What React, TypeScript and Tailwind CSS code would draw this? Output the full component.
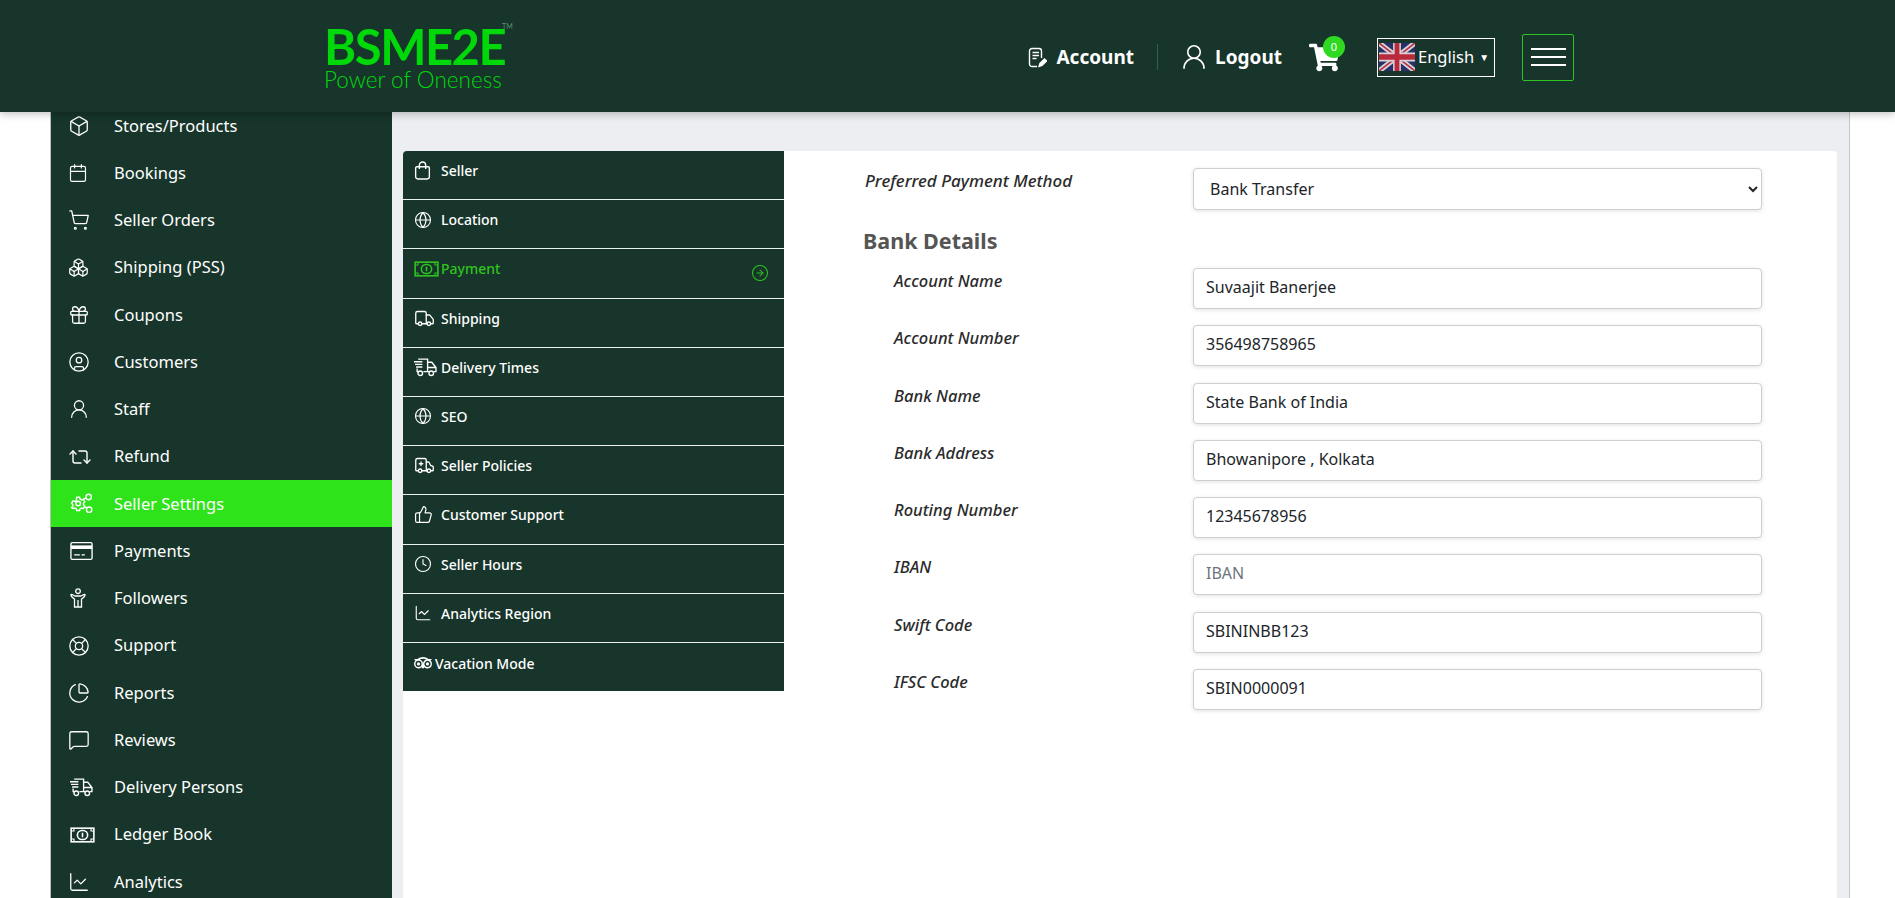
import React from "react";
import {
  Box, Calendar, ShoppingCart, Boxes, Gift, CircleUser, UserRound, Repeat2, LifeBuoy, ChartPie,
  MessageSquare, ChartLine, Globe, Truck, Ambulance, ThumbsUp, Clock, CircleArrowRight,
} from "lucide-react";
import { FaShoppingCart, FaTripadvisor } from "react-icons/fa";

type IconT = React.FC<{ className?: string; size?: number; strokeWidth?: number }>;

const SettingsGroup: IconT = ({ className }) => (
  <svg viewBox="0 0 24 22" className={className} fill="none" stroke="currentColor" strokeWidth="1.5" width="23" height="21">
    <circle cx="8.5" cy="11" r="2.4" />
    <path d="M7 4.5h3l.5 1.8 1.7.9 1.8-.6 1.4 2.6-1.3 1.3v1.9l1.3 1.3-1.4 2.6-1.8-.6-1.7.9-.5 1.8H7l-.5-1.8-1.7-.9-1.8.6L1.6 15.3l1.3-1.3v-1.9L1.6 10.8 3 8.2l1.8.6 1.7-.9z" />
    <circle cx="19.5" cy="4.2" r="2.8" />
    <circle cx="20" cy="17.5" r="2.8" />
    <path d="M14 6.5l3-1.4M15.5 14.5l2.2 1.3" />
  </svg>
);
const CardIcon: IconT = ({ className }) => (
  <svg viewBox="0 0 20 16" className={className} width="23" height="18" fill="none">
    <rect x="0.6" y="0.6" width="18.8" height="14.8" rx="1.2" stroke="currentColor" strokeWidth="1.2" />
    <rect x="0.6" y="3" width="18.8" height="3.2" fill="currentColor" />
    <path d="M3.5 11.5h5M10 11.5h3" stroke="currentColor" strokeWidth="1.2" />
  </svg>
);
const PersonUp: IconT = ({ className }) => (
  <svg viewBox="0 0 16 20" className={className} width="16" height="20" fill="none" stroke="currentColor" strokeWidth="1.3">
    <circle cx="8" cy="3.2" r="2.3" />
    <path d="M1 6.5c1.5-.5 2.5 1 4 1.5h6c1.500-.5 2.500-2 4-1.500.3 2-2 3.500-3.500 4.500V19h-7v-8C3 10 .7 8.500 1 6.500zM8 12v7" />
  </svg>
);
const FastTruck: IconT = ({ className }) => (
  <svg viewBox="0 0 22 18" className={className} width="23" height="19" fill="none" stroke="currentColor" strokeWidth="1.3">
    <path d="M4 1h9v12H9M4 13H3v-3M13 4h4l4 5v4h-2M13 13h1.500M13 9h8" />
    <path d="M0 3.500h8M1 6h7M2 8.500h6" />
    <circle cx="6" cy="14.500" r="2.200" />
    <circle cx="16.500" cy="14.500" r="2.200" />
  </svg>
);
const Money: IconT = ({ className }) => (
  <svg viewBox="0 0 22 14" className={className} width="25" height="16" fill="none" stroke="currentColor" strokeWidth="1.400">
    <rect x="1" y="1" width="20" height="12" />
    <path d="M1 3.500h2.500V1M21 3.500h-2.500V1M1 10.500h2.500V13M21 10.500h-2.500V13" strokeWidth="1" />
    <rect x="6.500" y="3" width="9" height="8" rx="4" />
    <path d="M11 5v4" />
  </svg>
);
const Bag: IconT = ({ className }) => (
  <svg viewBox="0 0 16 18" className={className} width="17" height="19" fill="none" stroke="currentColor" strokeWidth="1.300">
    <path d="M2.500 5.500h11a1 1 0 0 1 1 1V15a2 2 0 0 1-2 2h-9a2 2 0 0 1-2-2V6.500a1 1 0 0 1 1-1z" />
    <path d="M5 7.500V4a3 3 0 0 1 6 0v3.500" />
  </svg>
);
const NotePen: IconT = ({ className }) => (
  <svg viewBox="0 0 19 21" className={className} width="19" height="21" fill="none" stroke="currentColor" strokeWidth="1.400">
    <path d="M9 19.500H4a2.500 2.500 0 0 1-2.500-2.500V4A2.500 2.500 0 0 1 4 1.500h7A2.500 2.500 0 0 1 13.500 4v7" />
    <path d="M4.500 5.500h6.500M4.500 8.500h6.500M4.500 11.500h4" />
    <path d="M11 19.500l1-3 4.500-4.500 2 2-4.500 4.500z" fill="currentColor" />
  </svg>
);
const Flag = () => (
  <svg viewBox="0 0 60 40" width="36" height="28" preserveAspectRatio="none" className="block">
    <rect width="60" height="40" fill="#28306b" />
    <path d="M0 0L60 40M60 0L0 40" stroke="#d8d3d8" strokeWidth="8" />
    <path d="M0 0L60 40M60 0L0 40" stroke="#b8303f" strokeWidth="2.500" />
    <path d="M30 0V40M0 20H60" stroke="#d8d3d8" strokeWidth="13" />
    <path d="M30 0V40M0 20H60" stroke="#bb2a3c" strokeWidth="8" />
  </svg>
);

const side: [string, IconT, number][] = [
  ["Stores/Products", Box, 22],
  ["Bookings", Calendar, 20],
  ["Seller Orders", ShoppingCart, 22],
  ["Shipping (PSS)", Boxes, 21],
  ["Coupons", Gift, 22],
  ["Customers", CircleUser, 22],
  ["Staff", UserRound, 22],
  ["Refund", Repeat2, 24],
  ["Seller Settings", SettingsGroup, 0],
  ["Payments", CardIcon, 0],
  ["Followers", PersonUp, 0],
  ["Support", LifeBuoy, 22],
  ["Reports", ChartPie, 22],
  ["Reviews", MessageSquare, 22],
  ["Delivery Persons", FastTruck, 0],
  ["Ledger Book", Money, 0],
  ["Analytics", ChartLine, 22],
];

const tabs: [string, IconT, number][] = [
  ["Seller", Bag, 0],
  ["Location", Globe, 18],
  ["Payment", Money, 0],
  ["Shipping", Truck, 21],
  ["Delivery Times", FastTruck, 0],
  ["SEO", Globe, 18],
  ["Seller Policies", Ambulance, 21],
  ["Customer Support", ThumbsUp, 19],
  ["Seller Hours", Clock, 18],
  ["Analytics Region", ChartLine, 18],
];

const fields: [string, string, string][] = [
  ["Account Name", "Suvaajit Banerjee", ""],
  ["Account Number", "356498758965", ""],
  ["Bank Name", "State Bank of India", ""],
  ["Bank Address", "Bhowanipore , Kolkata", ""],
  ["Routing Number", "12345678956", ""],
  ["IBAN", "", "IBAN"],
  ["Swift Code", "SBININBB123", ""],
  ["IFSC Code", "SBIN0000091", ""],
];

function Icon({ I, s, sw }: { I: IconT; s: number; sw: number }) {
  return s ? <I size={s} strokeWidth={sw} /> : <I />;
}

export default function App() {
  return (
    <div className="flex h-[898px] w-[1895px] flex-col overflow-hidden bg-white font-['Noto_Sans',sans-serif]">
      <header className="relative z-10 flex h-[112px] shrink-0 items-center bg-[#17352a] pl-[324px] pr-[321px] pt-[2px] text-white shadow-[0_2px_8px_rgba(0,0,0,0.25)]">
        <div className="mt-[4px] flex w-[190px] flex-col text-[#00d80a]">
          <div className="relative mb-[1px] font-['Lato',sans-serif] text-[49px] font-bold leading-[40px] tracking-[-1.500px]">
            BSME2E
            <span className="absolute left-[178px] top-[-3px] text-[7px] font-normal leading-none tracking-normal text-[#5b8f6c]">TM</span>
          </div>
          <div className="font-['Lato',sans-serif] text-[22.500px] font-light leading-[26px]">Power of Oneness</div>
        </div>
        <div className="ml-auto flex items-center">
          <NotePen className="mr-[9px]" />
          <span className="text-[19px] font-bold leading-none">Account</span>
          <div className="ml-[23px] mr-[21px] h-[26px] w-px bg-[#3a5a4d]" />
          <UserRound size={30} strokeWidth={1.300} className="mr-[6px]" />
          <span className="text-[19px] font-bold leading-none">Logout</span>
          <div className="relative ml-[27px] mr-[37px]">
            <FaShoppingCart size={31} />
            <span className="absolute left-[14px] top-[-6px] flex h-[22px] w-[22px] items-center justify-center rounded-full bg-[#30d921] text-[11px] leading-none">0</span>
          </div>
          <div className="flex h-[39px] w-[118px] items-center border border-white pl-[1px]">
            <Flag />
            <span className="ml-[3px] text-[16.500px] leading-none">English</span>
            <span className="ml-[5px] text-[10px] leading-none">▼</span>
          </div>
          <button className="ml-[27px] flex h-[47px] w-[52px] flex-col items-center justify-center gap-[6px] rounded-[2px] border border-[#2fc31f]">
            <span className="h-[2px] w-[35px] bg-white" />
            <span className="h-[2px] w-[35px] bg-white" />
            <span className="h-[2px] w-[35px] bg-white" />
          </button>
        </div>
      </header>

      <div className="flex min-h-0 flex-1 pl-[50px] pr-[45px]">
        <aside className="w-[342px] shrink-0 overflow-hidden border-l border-[#b9c0bc] bg-[#17352a] text-white">
          <nav className="-mt-[9.800px]">
            {side.map(([label, I, s]) => (
              <div key={label} className={`flex h-[47.250px] items-center ${label === "Seller Settings" ? "bg-[#2fe31b]" : ""}`}>
                <span className={`flex w-[63px] shrink-0 items-center ${s ? "pl-[17px]" : "pl-[19px]"}`}>
                  <Icon I={I} s={s} sw={1.400} />
                </span>
                <span className="text-[16.500px] leading-none">{label}</span>
              </div>
            ))}
          </nav>
        </aside>

        <main className="min-w-0 flex-1 border-r border-[#c4c6c9] bg-[#eceef2] pl-[11px] pr-[12px] pt-[39px]">
          <div className="flex h-full rounded-t-[4px] bg-white">
            <div className="h-[540px] w-[381px] shrink-0 overflow-hidden rounded-tl-[4px] bg-[#17352a] text-white">
              {tabs.map(([label, I, s]) => {
                const active = label === "Payment";
                return (
                  <div key={label} className={`relative flex h-[49.200px] border-b border-[#e8f3ee] pl-[11px] pt-[11px] ${active ? "text-[#2fc31f]" : ""}`}>
                    <span className="flex h-[17px] w-[27px] shrink-0 items-center">
                      <Icon I={I} s={s} sw={1.500} />
                    </span>
                    <span className="text-[14px] font-medium leading-[17px]">{label}</span>
                    {active && <CircleArrowRight size={18} strokeWidth={1.400} className="absolute right-[15px] top-[15px]" />}
                  </div>
                );
              })}
              <div className="flex h-[49px] items-start pl-[11px] pt-[12px]">
                <span className="flex h-[17px] w-[21px] items-center"><FaTripadvisor size={18} /></span>
                <span className="text-[14px] font-medium leading-[17px]">Vacation Mode</span>
              </div>
            </div>

            <div className="min-w-0 flex-1 pl-[81px] pr-[74px] pt-[17px]">
              <div className="flex h-[42px]">
                <label className="w-[328px] shrink-0 pt-[1px] text-[17px] font-medium italic leading-[24px] text-[#2b2b2b]">Preferred Payment Method</label>
                <select className="h-[42px] w-[569px] rounded-[4px] border border-[#cfcfcf] bg-white pl-[12px] pr-[6px] text-[16px] text-[#212529] shadow-[0_1px_4px_rgba(0,0,0,0.12)] outline-none">
                  <option>Bank Transfer</option>
                </select>
              </div>
              <h2 className="-ml-[2px] mb-[13px] mt-[16px] h-[29px] text-[21.500px] font-bold leading-[29px] text-[#555555]">Bank Details</h2>
              <div className="flex flex-col gap-[16.300px]">
                {fields.map(([label, value, ph]) => (
                  <div key={label} className="flex h-[41px]">
                    <label className="w-[328px] shrink-0 pl-[29px] pt-[1px] text-[16.500px] font-medium italic leading-[24px] text-[#2b2b2b]">{label}</label>
                    <input
                      readOnly
                      value={value}
                      placeholder={ph}
                      className="h-[41px] w-[569px] rounded-[4px] border border-[#cfcfcf] bg-white px-[12px] pb-[3px] text-[16px] text-[#212529] shadow-[0_1px_4px_rgba(0,0,0,0.12)] outline-none placeholder:text-[#6c757d]"
                    />
                  </div>
                ))}
              </div>
            </div>
          </div>
        </main>
      </div>
    </div>
  );
}
